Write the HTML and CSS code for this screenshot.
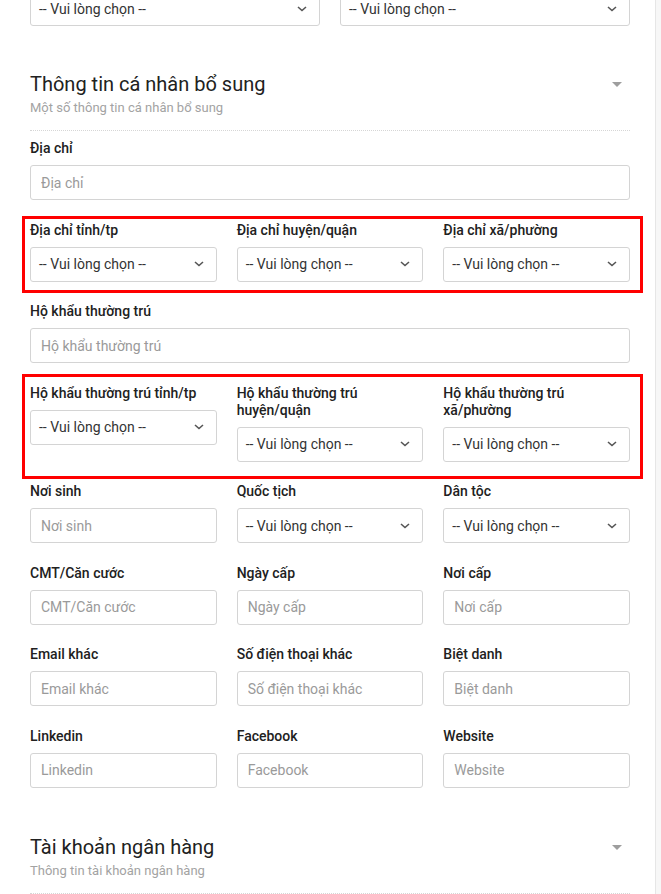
FILE: index.html
```html
<!DOCTYPE html>
<html>
<head>
    <meta charset="utf-8">
    <link rel="stylesheet" href="styles.css">
</head>
<body>
<div class="page">
    <div class="content">
        <div class="row cols-2 first-row">
            <div class="form-group">
                <div class="select"><span>-- Vui lòng chọn --</span><svg class="chev" width="10" height="6" viewBox="0 0 10 6"><path d="M1 1l4 3.5L9 1" fill="none" stroke="#555" stroke-width="1.6"/></svg></div>
            </div>
            <div class="form-group">
                <div class="select"><span>-- Vui lòng chọn --</span><svg class="chev" width="10" height="6" viewBox="0 0 10 6"><path d="M1 1l4 3.5L9 1" fill="none" stroke="#555" stroke-width="1.6"/></svg></div>
            </div>
        </div>

        <div class="section">
            <div class="section-head">
                <div>
                    <h3 class="section-title">Thông tin cá nhân bổ sung</h3>
                    <p class="section-sub">Một số thông tin cá nhân bổ sung</p>
                </div>
                <span class="caret"></span>
            </div>
            <div class="section-body">
                <div class="row">
                    <div class="form-group">
                        <label>Địa chỉ</label>
                        <input type="text" placeholder="Địa chỉ">
                    </div>
                </div>

                <div class="row cols-3 highlight hl-1">
                    <div class="form-group">
                        <label>Địa chỉ tỉnh/tp</label>
                        <div class="select"><span>-- Vui lòng chọn --</span><svg class="chev" width="10" height="6" viewBox="0 0 10 6"><path d="M1 1l4 3.5L9 1" fill="none" stroke="#555" stroke-width="1.6"/></svg></div>
                    </div>
                    <div class="form-group">
                        <label>Địa chỉ huyện/quận</label>
                        <div class="select"><span>-- Vui lòng chọn --</span><svg class="chev" width="10" height="6" viewBox="0 0 10 6"><path d="M1 1l4 3.5L9 1" fill="none" stroke="#555" stroke-width="1.6"/></svg></div>
                    </div>
                    <div class="form-group">
                        <label>Địa chỉ xã/phường</label>
                        <div class="select"><span>-- Vui lòng chọn --</span><svg class="chev" width="10" height="6" viewBox="0 0 10 6"><path d="M1 1l4 3.5L9 1" fill="none" stroke="#555" stroke-width="1.6"/></svg></div>
                    </div>
                </div>

                <div class="row">
                    <div class="form-group">
                        <label>Hộ khẩu thường trú</label>
                        <input type="text" placeholder="Hộ khẩu thường trú">
                    </div>
                </div>

                <div class="row cols-3 highlight hl-2">
                    <div class="form-group">
                        <label>Hộ khẩu thường trú tỉnh/tp</label>
                        <div class="select"><span>-- Vui lòng chọn --</span><svg class="chev" width="10" height="6" viewBox="0 0 10 6"><path d="M1 1l4 3.5L9 1" fill="none" stroke="#555" stroke-width="1.6"/></svg></div>
                    </div>
                    <div class="form-group">
                        <label>Hộ khẩu thường trú huyện/quận</label>
                        <div class="select"><span>-- Vui lòng chọn --</span><svg class="chev" width="10" height="6" viewBox="0 0 10 6"><path d="M1 1l4 3.5L9 1" fill="none" stroke="#555" stroke-width="1.6"/></svg></div>
                    </div>
                    <div class="form-group">
                        <label>Hộ khẩu thường trú xã/phường</label>
                        <div class="select"><span>-- Vui lòng chọn --</span><svg class="chev" width="10" height="6" viewBox="0 0 10 6"><path d="M1 1l4 3.5L9 1" fill="none" stroke="#555" stroke-width="1.6"/></svg></div>
                    </div>
                </div>

                <div class="row cols-3">
                    <div class="form-group">
                        <label>Nơi sinh</label>
                        <input type="text" placeholder="Nơi sinh">
                    </div>
                    <div class="form-group">
                        <label>Quốc tịch</label>
                        <div class="select"><span>-- Vui lòng chọn --</span><svg class="chev" width="10" height="6" viewBox="0 0 10 6"><path d="M1 1l4 3.5L9 1" fill="none" stroke="#555" stroke-width="1.6"/></svg></div>
                    </div>
                    <div class="form-group">
                        <label>Dân tộc</label>
                        <div class="select"><span>-- Vui lòng chọn --</span><svg class="chev" width="10" height="6" viewBox="0 0 10 6"><path d="M1 1l4 3.5L9 1" fill="none" stroke="#555" stroke-width="1.6"/></svg></div>
                    </div>
                </div>

                <div class="row cols-3">
                    <div class="form-group">
                        <label>CMT/Căn cước</label>
                        <input type="text" placeholder="CMT/Căn cước">
                    </div>
                    <div class="form-group">
                        <label>Ngày cấp</label>
                        <input type="text" placeholder="Ngày cấp">
                    </div>
                    <div class="form-group">
                        <label>Nơi cấp</label>
                        <input type="text" placeholder="Nơi cấp">
                    </div>
                </div>

                <div class="row cols-3">
                    <div class="form-group">
                        <label>Email khác</label>
                        <input type="text" placeholder="Email khác">
                    </div>
                    <div class="form-group">
                        <label>Số điện thoại khác</label>
                        <input type="text" placeholder="Số điện thoại khác">
                    </div>
                    <div class="form-group">
                        <label>Biệt danh</label>
                        <input type="text" placeholder="Biệt danh">
                    </div>
                </div>

                <div class="row cols-3">
                    <div class="form-group">
                        <label>Linkedin</label>
                        <input type="text" placeholder="Linkedin">
                    </div>
                    <div class="form-group">
                        <label>Facebook</label>
                        <input type="text" placeholder="Facebook">
                    </div>
                    <div class="form-group">
                        <label>Website</label>
                        <input type="text" placeholder="Website">
                    </div>
                </div>
            </div>
        </div>

        <div class="section">
            <div class="section-head">
                <div>
                    <h3 class="section-title">Tài khoản ngân hàng</h3>
                    <p class="section-sub">Thông tin tài khoản ngân hàng</p>
                </div>
                <span class="caret"></span>
            </div>
        </div>
    </div>
</div>
</body>
</html>
```

FILE: styles.css
```css
body {
    margin: 0;
    padding: 0;
    background-color: #f7f7f7;
    font-family: Roboto, "Liberation Sans", Arial, sans-serif;
    color: #212121;
}

.page {
    width: 655px;
    min-height: 100vh;
    background-color: #fff;
    border-right: 1px solid #e6e6e6;
    overflow: hidden;
}

.content {
    width: 600px;
    padding-left: 30px;
}

.row {
    display: grid;
    grid-template-columns: 1fr;
    column-gap: 20px;
    align-items: start;
    margin-bottom: 21.5px;
}

.cols-2 {
    grid-template-columns: 1fr 1fr;
}

.cols-3 {
    grid-template-columns: 1fr 1fr 1fr;
}

.first-row {
    margin-top: -9px;
}

.form-group {
    display: flex;
    flex-direction: column;
}

.form-group label {
    font-size: 14px;
    font-weight: 500;
    line-height: 17px;
    color: #212121;
    margin-bottom: 8px;
}

.form-group input,
.select {
    box-sizing: border-box;
    height: 35px;
    width: 100%;
    border: 1px solid #d4d4d4;
    border-radius: 3px;
    background-color: #fff;
    font-family: Roboto, "Liberation Sans", Arial, sans-serif;
    font-size: 14px;
}

.form-group input {
    padding: 0 10px;
    color: #333;
    outline: none;
}

.form-group input::placeholder {
    color: #9a9a9a;
}

.select {
    display: flex;
    align-items: center;
    justify-content: space-between;
    padding: 0 12px 0 8px;
    color: #333;
}

.chev {
    display: block;
}

/* red annotation boxes */
.highlight {
    position: relative;
}

.highlight::after {
    content: "";
    position: absolute;
    border: 3px solid #f00;
    pointer-events: none;
}

.hl-1::after {
    top: -6px;
    bottom: -11px;
    left: -8px;
    right: -13px;
}

.hl-2::after {
    top: -11px;
    bottom: -17px;
    left: -8px;
    right: -13px;
}

.section-head {
    display: flex;
    justify-content: space-between;
    align-items: flex-start;
    padding: 22px 0 13px;
    border-bottom: 1px dotted #d6d6d6;
}

.section + .section .section-head {
    padding-top: 24px;
}

.section-title {
    margin: 0;
    font-size: 20px;
    font-weight: 400;
    line-height: 28px;
    color: #212121;
}

.section-sub {
    margin: 1px 0 0;
    font-size: 13px;
    line-height: 18px;
    color: #a3a3a3;
}

.caret {
    width: 0;
    height: 0;
    margin: 12px 8px 0 0;
    border-top: 5px solid #9e9e9e;
    border-left: 5px solid transparent;
    border-right: 5px solid transparent;
}

.section-body {
    padding-top: 9.5px;
}
```
